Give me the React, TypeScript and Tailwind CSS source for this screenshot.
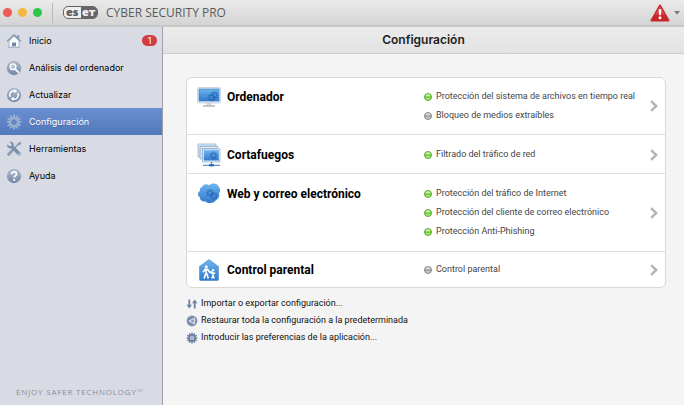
import React from "react";

function HomeIcon() {
  return (
    <svg viewBox="0 0 16 16" className="h-4 w-4 shrink-0" aria-hidden="true">
      <path d="M11.3 2.2h1.9v3h-1.9z" fill="#7d90ab" />
      <path d="M3 8 8 3l5 5v6.2H3z" fill="#fafbfd" stroke="#8fa0b8" strokeWidth=".7" />
      <path d="M1 8.4 8 1.8l7 6.6" fill="none" stroke="#8294ae" strokeWidth="1.2" />
      <path d="M6 9.600h4v3.600H6z" fill="#7186a3" />
      <path d="M1.8 14.3h12.4" stroke="#a3b0c2" strokeWidth=".8" />
    </svg>
  );
}

function Disc({ children }: { children: React.ReactNode }) {
  return (
    <svg viewBox="0 0 16 16" className="h-4 w-4 shrink-0" aria-hidden="true">
      <defs>
        <linearGradient id="disc" x1="0" y1="0" x2="0" y2="1">
          <stop offset="0" stopColor="#b0bdcf" />
          <stop offset="1" stopColor="#7388a7" />
        </linearGradient>
      </defs>
      <circle cx="8" cy="8" r="7.2" fill="url(#disc)" />
      {children}
    </svg>
  );
}

function SearchDiscIcon() {
  return (
    <Disc>
      <circle cx="7" cy="6.8" r="2.9" fill="#b9c6d8" stroke="#fff" strokeWidth="1.3" />
      <path d="m9.2 9 3 3.2" stroke="#fff" strokeWidth="1.8" strokeLinecap="round" />
    </Disc>
  );
}

function UpdateDiscIcon() {
  return (
    <Disc>
      <path d="M4.3 10.2A4.2 4.2 0 0 1 8.6 3.9M11.7 5.8a4.2 4.2 0 0 1-4.3 6.3" fill="none" stroke="#fff" strokeWidth="1.5" />
      <path d="m8.2 1.9 3.2 2.3-3.3 2zM7.8 14.1l-3.2-2.3 3.3-2z" fill="#fff" />
    </Disc>
  );
}

function HelpDiscIcon() {
  return (
    <Disc>
      <path d="M5.7 6.3c0-3.3 4.8-3 4.8-.3 0 1.8-2.3 1.6-2.3 3.5" fill="none" stroke="#fff" strokeWidth="1.7" />
      <circle cx="8.2" cy="11.9" r="1.1" fill="#fff" />
    </Disc>
  );
}

const TEETH = [0, 30, 60, 90, 120, 150, 180, 210, 240, 270, 300, 330];

function GearIcon({ className, color, hole }: { className: string; color: string; hole: string }) {
  return (
    <svg viewBox="0 0 16 16" className={className} aria-hidden="true">
      {TEETH.map((a) => (
        <path key={a} d="M7.2.6h1.6l.5 3.300H6.7z" fill={color} transform={`rotate(${a} 8 8)`} />
      ))}
      <circle cx="8" cy="8" r="3.8" fill="none" stroke={color} strokeWidth="2.4" />
      <circle cx="8" cy="8" r="2.6" fill={hole} />
    </svg>
  );
}

function ToolsIcon() {
  return (
    <svg viewBox="0 0 16 16" className="h-4 w-4 shrink-0" aria-hidden="true">
      <path d="m13.2 2.2-5.4 5.6" stroke="#8799b3" strokeWidth="1.5" />
      <path d="m12 2 2.200-1.200 1.100 1.100L14.100 4l-1 .4-1.500-1.500z" fill="#8799b3" />
      <path d="m7 8.800-4.300 4.500" stroke="#8c9eb7" strokeWidth="3" strokeLinecap="round" />
      <path d="M1.3 3.2 3.6 5.3l1.7-.4.4-1.7L3.6 1C6 .4 8.3 2 7.7 4.9l6.7 6.6c1.3 1.5-.9 3.9-2.5 2.5L5.2 7.3C2.700 8 .6 5.7 1.3 3.200z" fill="#7a8fac" />
      <circle cx="13" cy="12.7" r=".8" fill="#d9dce4" />
    </svg>
  );
}

function BlueFill({ id }: { id: string }) {
  return (
    <defs>
      <linearGradient id={id} x1="0" y1="0" x2="0" y2="1">
        <stop offset="0" stopColor="#6cb5ee" />
        <stop offset="1" stopColor="#3379cc" />
      </linearGradient>
    </defs>
  );
}

function SmallGear({ x, y }: { x: number; y: number }) {
  return (
    <g transform={`translate(${x} ${y})`} opacity=".55">
      {[0, 45, 90, 135].map((a) => (
        <path key={a} d="M-.7-4H.7V4H-.7z" fill="#1c5cac" transform={`rotate(${a})`} />
      ))}
      <circle r="2.2" fill="#4a90da" stroke="#1c5cac" strokeWidth="1.2" />
    </g>
  );
}

function ComputerIcon() {
  return (
    <svg viewBox="0 0 24 22" className="h-[22px] w-6" aria-hidden="true">
      <BlueFill id="screen" />
      <path d="M9.5 17h5l.6 2.500H9z" fill="#d3d8df" />
      <path d="M6 20h12" stroke="#8c949e" strokeWidth="1" />
      <rect x=".5" y="1.500" width="23" height="15.500" rx="1" fill="#dbe9f5" stroke="#bccbd9" strokeWidth=".7" />
      <rect x="2" y="3" width="20" height="12" fill="url(#screen)" stroke="#3d7fbf" strokeWidth=".6" />
      <SmallGear x={17.500} y={9} />
      <SmallGear x={14.500} y={11.500} />
    </svg>
  );
}

function NetworkIcon() {
  return (
    <svg viewBox="0 0 24 24" className="h-6 w-6" aria-hidden="true">
      <BlueFill id="net" />
      <path d="M1 14V1h18v2H3v11z" fill="#e4eef7" stroke="#7ea6ca" strokeWidth=".7" />
      <path d="M3.200 16V3.500H21v2H5.300V16z" fill="#e4eef7" stroke="#7ea6ca" strokeWidth=".7" />
      <rect x="5.500" y="6" width="17.500" height="13" fill="#e4eef7" stroke="#8aaccb" strokeWidth=".7" />
      <rect x="6.800" y="7.200" width="15" height="10.300" fill="url(#net)" />
      <SmallGear x={16.500} y={12.500} />
      <path d="M14.500 19v3M6 22.300h17" stroke="#5d94c9" strokeWidth="1.300" />
      <ellipse cx="14.500" cy="22.200" rx="3" ry="1.300" fill="#286bb7" />
    </svg>
  );
}

function CloudIcon() {
  return (
    <svg viewBox="0 0 24 22" className="h-[22px] w-6" aria-hidden="true">
      <BlueFill id="cloud" />
      <path
        d="M5 4C7 .5 10 1 12 2.300 15-.2 20 0 21.500 3.500 24 6 23 9 22 10.500c1 3-.5 5.500-3 6.500-1.500 3.500-8 4-10.500 1.500C4.500 19 2.500 16.500 3 14.500.5 13 0 9.500 3 8 2.500 6 3 5 5 4z"
        fill="url(#cloud)"
      />
      <SmallGear x={13} y={10} />
      <SmallGear x={17} y={13} />
    </svg>
  );
}

function ParentalIcon() {
  return (
    <svg viewBox="0 0 24 24" className="h-6 w-6" aria-hidden="true">
      <BlueFill id="house" />
      <path d="M2.500 8.500 12 1.500l9.500 7v13c0 .6-.4 1-1 1h-17c-.6 0-1-.4-1-1z" fill="url(#house)" stroke="#3d7fc0" strokeWidth=".5" />
      <circle cx="9.300" cy="8.800" r="1.500" fill="#fff" />
      <path d="m6 14.200 2-3h2.500l2.500 3.300 2-.7M9.200 11v5M8.700 15.500l-1.500 5M9.800 15.500l1.500 5" fill="none" stroke="#fff" strokeWidth="1.600" />
      <circle cx="16" cy="12.300" r="1.200" fill="#fff" />
      <path d="M16 14v3.500l-1.300 3M16 17.500l1.300 3M14 15.200h4.200" fill="none" stroke="#fff" strokeWidth="1.400" />
    </svg>
  );
}

function Chevron() {
  return (
    <svg viewBox="0 0 8 12" className="h-3 w-2 shrink-0" aria-hidden="true">
      <path d="m1.200 1.200 5 4.800-5 4.800" fill="none" stroke="#b4b4b4" strokeWidth="2.500" />
    </svg>
  );
}

function Bulb({ on }: { on: boolean }) {
  return (
    <svg viewBox="0 0 8 8" className="h-2 w-2 shrink-0" aria-hidden="true">
      <circle cx="4" cy="4" r="3.500" fill={on ? "#7ddb3c" : "#b0b0b0"} stroke={on ? "#5c9f42" : "#858585"} strokeWidth=".9" />
      <path d="M1.500 3.400a2.500 2.200 0 0 1 5 0z" fill={on ? "#cdf5ac" : "#dedede"} />
      <path d="M.8 4h6.400" stroke={on ? "#4f9b31" : "#777"} strokeWidth=".5" />
      <path d="M2 5.800h4" stroke={on ? "#b8f28a" : "#d2d2d2"} strokeWidth="1" />
    </svg>
  );
}

function SwapIcon() {
  return (
    <svg viewBox="0 0 12 12" className="h-3 w-3 shrink-0" aria-hidden="true">
      <path d="M3.300 1.500v6M8.700 10.500v-6" stroke="#6e82a0" strokeWidth="1.800" />
      <path d="M.6 6.800h5.400L3.300 10.500zM6 5.200h5.400L8.700 1.500z" fill="#6e82a0" />
    </svg>
  );
}

function RestoreIcon() {
  return (
    <svg viewBox="0 0 12 12" className="h-3 w-3 shrink-0" aria-hidden="true">
      <circle cx="6" cy="6" r="5.400" fill="#7d90ad" />
      <path d="M8.400 3.200v5.600L3.200 6z" fill="#8c9db7" stroke="#f1f4f8" strokeWidth=".9" />
    </svg>
  );
}

function WarningIcon() {
  return (
    <svg viewBox="0 0 20 18" className="h-[18px] w-5" aria-hidden="true">
      <path d="M10 1.500 18.500 16.500h-17z" fill="#c9252b" stroke="#c9252b" strokeWidth="2" strokeLinejoin="round" />
      <path d="M10 2 5 10.500h10z" fill="#d9474b" />
      <path d="M8.600 5.200h2.800l-.5 6H9.100z" fill="#fff" />
      <circle cx="10" cy="13.800" r="1.500" fill="#fff" />
    </svg>
  );
}

const NAV = [
  { label: "Inicio", icon: <HomeIcon />, badge: "1" },
  { label: "Análisis del ordenador", icon: <SearchDiscIcon /> },
  { label: "Actualizar", icon: <UpdateDiscIcon /> },
  { label: "Configuración", icon: <GearIcon className="h-4 w-4 shrink-0" color="#9aaed0" hole="#6587c4" />, active: true },
  { label: "Herramientas", icon: <ToolsIcon /> },
  { label: "Ayuda", icon: <HelpDiscIcon /> },
];

const SECTIONS = [
  {
    title: "Ordenador",
    icon: <ComputerIcon />,
    pad: "py-[9px]",
    items: [
      { label: "Protección del sistema de archivos en tiempo real", on: true },
      { label: "Bloqueo de medios extraíbles", on: false },
    ],
  },
  {
    title: "Cortafuegos",
    icon: <NetworkIcon />,
    pad: "pt-2.5 pb-[9px]",
    items: [{ label: "Filtrado del tráfico de red", on: true }],
  },
  {
    title: "Web y correo electrónico",
    icon: <CloudIcon />,
    pad: "py-2.5",
    items: [
      { label: "Protección del tráfico de Internet", on: true },
      { label: "Protección del cliente de correo electrónico", on: true },
      { label: "Protección Anti-Phishing", on: true },
    ],
  },
  {
    title: "Control parental",
    icon: <ParentalIcon />,
    pad: "py-2",
    items: [{ label: "Control parental", on: false }],
  },
];

const ACTIONS = [
  { label: "Importar o exportar configuración...", icon: <SwapIcon /> },
  { label: "Restaurar toda la configuración a la predeterminada", icon: <RestoreIcon /> },
  {
    label: "Introducir las preferencias de la aplicación...",
    icon: <GearIcon className="h-3 w-3 shrink-0" color="#6e82a0" hole="#a9b5c8" />,
  },
];

export default function App() {
  return (
    <div className="flex min-h-screen flex-col bg-[#f4f4f4] font-['Roboto','Liberation_Sans',sans-serif] text-black">
      <header className="flex h-[27px] items-center border-b-2 border-[#c6c6c6] bg-linear-to-b from-[#eaeaea] to-[#d4d4d4] pr-1 pl-[3px]">
        <div className="flex gap-1.5">
          <button aria-label="Cerrar" className="h-[9px] w-[9px] rounded-full bg-[#ee5c58]" />
          <button aria-label="Minimizar" className="h-[9px] w-[9px] rounded-full bg-[#f5b83d]" />
          <button aria-label="Ampliar" className="h-[9px] w-[9px] rounded-full bg-[#30c748]" />
        </div>
        <div className="ml-2.5 h-5 w-px bg-[#b9b9b9]" />
        <div className="ml-2.5 flex h-[13px] w-[35px] rounded-[5px] border border-[#666] bg-[#eee] font-['Open_Sans',sans-serif] text-[11px] leading-[9px] font-extrabold">
          <span className="flex-1 text-center text-[#5c5c5c]">es</span>
          <span className="flex-1 rounded-r-[4px] bg-[#666] text-center text-[#f2f2f2]">eт</span>
        </div>
        <h1 className="ml-2 font-['Open_Sans',sans-serif] text-xs text-[#5b5b5b]">CYBER SECURITY PRO</h1>
        <button aria-label="Alertas" className="ml-auto flex items-center gap-1">
          <WarningIcon />
          <svg viewBox="0 0 6 4" className="h-1 w-1.5" aria-hidden="true">
            <path d="M0 0h6L3 3.500z" fill="#777" />
          </svg>
        </button>
      </header>

      <div className="flex flex-1">
        <aside className="flex w-[163px] shrink-0 flex-col border-r border-[#9d9fa8] bg-[#d8dbe3]">
          <nav className="font-['Inter','Liberation_Sans',sans-serif] text-[9px]">
            {NAV.map((item) => (
              <a
                key={item.label}
                href="#"
                className={
                  item.active
                    ? "flex h-[27px] items-center gap-[7px] bg-linear-to-b from-[#6a8fd0] to-[#5279bd] pr-[5px] pl-1.5 text-white text-shadow-sm"
                    : "flex h-[27px] items-center gap-[7px] pr-[5px] pl-1.5"
                }
              >
                {item.icon}
                <span>{item.label}</span>
                {item.badge && (
                  <span className="ml-auto flex h-[11px] w-[15px] items-center justify-center rounded-full bg-[#d23c45] text-white">
                    {item.badge}
                  </span>
                )}
              </a>
            ))}
          </nav>
          <p className="mt-auto pb-2 pl-4 font-['Open_Sans',sans-serif] text-[8px] leading-[10px] tracking-widest text-[#8d8f96]">
            ENJOY SAFER TECHNOLOGY<span className="text-[#b0b2ba]">™</span>
          </p>
        </aside>

        <main className="min-w-0 flex-1">
          <div className="flex h-[27px] items-center justify-center border-b border-[#cfcfcf] bg-linear-to-b from-[#ececec] to-[#e2e2e2]">
            <h2 className="font-['Inter','Liberation_Sans',sans-serif] text-xs font-semibold text-[#222]">Configuración</h2>
          </div>

          <div className="pt-[23px] pr-[18px] pl-[23px]">
            <div className="divide-y divide-[#dedede] rounded-md border border-[#d8d8d8] bg-white">
              {SECTIONS.map((s) => (
                <button key={s.title} className={`flex w-full items-center pr-[7px] pl-2.5 text-left ${s.pad}`}>
                  <span className="flex h-[19px] w-[227px] shrink-0 items-center gap-1.5 self-start">
                    {s.icon}
                    <span className="text-xs font-bold">{s.title}</span>
                  </span>
                  <span className="flex-1">
                    {s.items.map((it) => (
                      <span key={it.label} className="flex h-[19px] items-center gap-1 text-[9px] text-[#444]">
                        <Bulb on={it.on} />
                        {it.label}
                      </span>
                    ))}
                  </span>
                  <Chevron />
                </button>
              ))}
            </div>
            <ul className="mt-[7px]">
              {ACTIONS.map((a) => (
                <li key={a.label}>
                  <a href="#" className="flex h-[17px] items-center gap-[3px] text-[9px] text-[#111]">
                    {a.icon}
                    {a.label}
                  </a>
                </li>
              ))}
            </ul>
          </div>
        </main>
      </div>
    </div>
  );
}
